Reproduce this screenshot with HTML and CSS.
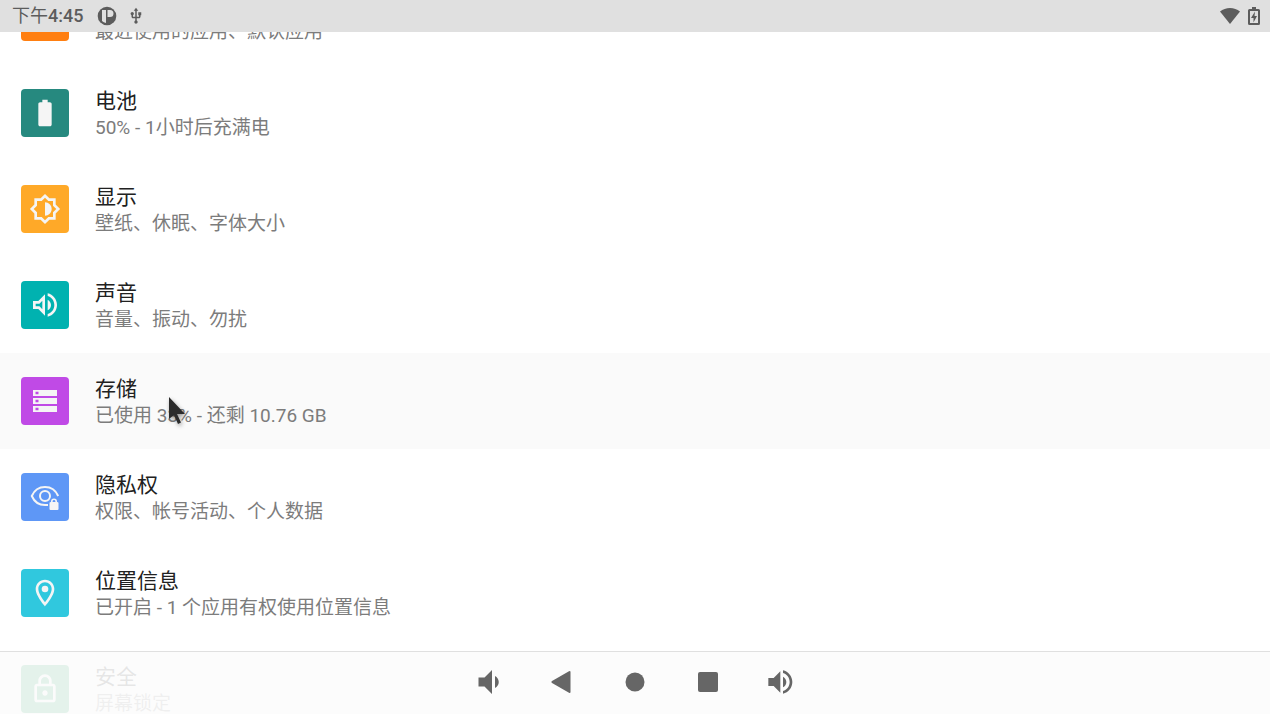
FILE: index.html
```html
<!DOCTYPE html>
<html lang="zh-CN">
<head>
    <meta charset="UTF-8">
    <meta name="viewport" content="width=device-width, initial-scale=1.0">
    <title>设置</title>
    <link rel="stylesheet" href="styles.css">
</head>
<body>
    <header class="status-bar">
        <div class="status-left">
            <div class="clock">下午<span class="clock-time">4:45</span></div>
            <svg class="status-app" viewBox="0 0 20 20">
                <circle cx="10" cy="10" r="9.300"/>
                <path class="cut" d="M5 4h4v13q-2.500-.500-4-2z"/>
                <path class="cut" d="M10.500 4h2.500a3.500 3.500 0 0 1 0 7H10.500z"/>
            </svg>
            <svg class="status-usb" viewBox="0 0 24 24">
                <path d="M15 7v4h1v2h-3V5h2l-3-4-3 4h2v8H8v-2.070c.700-.370 1.200-1.080 1.200-1.930 0-1.210-.990-2.200-2.200-2.200s-2.200.990-2.200 2.200c0 .850.500 1.560 1.200 1.930V13c0 1.110.890 2 2 2h3v3.050c-.710.370-1.200 1.100-1.200 1.950 0 1.220.990 2.200 2.200 2.200s2.200-.980 2.200-2.200c0-.850-.490-1.580-1.200-1.950V15h3c1.110 0 2-.890 2-2v-2h1V7h-4z"/>
            </svg>
        </div>
        <div class="status-right">
            <svg class="status-wifi" viewBox="0 0 20 16">
                <path d="M10 16L0 3.500C2.800 1.200 6.300 0 10 0s7.200 1.200 10 3.500z"/>
            </svg>
            <svg class="status-battery" viewBox="0 0 12 18">
                <path fill-rule="evenodd" d="M4 0h4v2h2.500q1.500 0 1.500 1.500v13q0 1.500-1.500 1.500h-9Q0 18 0 16.500v-13Q0 2 1.500 2H4zM2 4v12h8V4z"/>
                <path d="M7 4.500L3 11h2.500v4.500L9 9H6.500z"/>
            </svg>
        </div>
    </header>

    <main class="settings">
        <ul class="settings-list">
            <li>
                <a class="item" href="#apps">
                    <span class="icon icon-apps"></span>
                    <span class="text">
                        <span class="title">应用和通知</span>
                        <span class="summary">最近使用的应用、默认应用</span>
                    </span>
                </a>
            </li>
            <li>
                <a class="item" href="#battery">
                    <span class="icon icon-battery">
                        <svg viewBox="0 0 24 24"><path d="M15.670 4H14V2h-4v2H8.330C7.600 4 7 4.600 7 5.330v15.330C7 21.400 7.600 22 8.330 22h7.330c.740 0 1.340-.600 1.340-1.330V5.330C17 4.600 16.400 4 15.670 4z"/></svg>
                    </span>
                    <span class="text">
                        <span class="title">电池</span>
                        <span class="summary">50% - 1小时后充满电</span>
                    </span>
                </a>
            </li>
            <li>
                <a class="item" href="#display">
                    <span class="icon icon-display">
                        <svg viewBox="0 0 24 24"><path d="M20 15.310L23.310 12 20 8.690V4h-4.690L12 .690 8.690 4H4v4.690L.690 12 4 15.310V20h4.690L12 23.310 15.310 20H20v-4.690zm-2-.830V18h-3.520L12 20.480 9.520 18H6v-3.520L3.520 12 6 9.520V6h3.520L12 3.520 14.480 6H18v3.520L20.480 12 18 14.480zM12 7v10c2.760 0 5-2.240 5-5s-2.240-5-5-5z"/></svg>
                    </span>
                    <span class="text">
                        <span class="title">显示</span>
                        <span class="summary">壁纸、休眠、字体大小</span>
                    </span>
                </a>
            </li>
            <li>
                <a class="item" href="#sound">
                    <span class="icon icon-sound">
                        <svg viewBox="0 0 24 24"><path d="M3 9v6h4l5 5V4L7 9H3zm7-.170v6.340L7.830 13H5v-2h2.830L10 8.830zM16.500 12c0-1.770-1.020-3.290-2.500-4.030v8.050c1.480-.730 2.500-2.250 2.500-4.020zM14 3.230v2.060c2.890.860 5 3.540 5 6.710s-2.110 5.850-5 6.710v2.060c4.010-.910 7-4.490 7-8.770s-2.990-7.860-7-8.770z"/></svg>
                    </span>
                    <span class="text">
                        <span class="title">声音</span>
                        <span class="summary">音量、振动、勿扰</span>
                    </span>
                </a>
            </li>
            <li>
                <a class="item item-active" href="#storage">
                    <span class="icon icon-storage">
                        <svg viewBox="0 0 32 32"><path fill-rule="evenodd" d="M4 5h24v6H4zM6.500 6.700v2.600h3V6.700zM4 13h24v6H4zM6.500 14.700v2.600h3v-2.600zM4 21h24v6H4zM6.500 22.700v2.600h3v-2.600z"/></svg>
                    </span>
                    <span class="text">
                        <span class="title">存储</span>
                        <span class="summary">已使用 33% - 还剩 10.76 GB</span>
                    </span>
                </a>
            </li>
            <li>
                <a class="item" href="#privacy">
                    <span class="icon icon-privacy">
                        <svg viewBox="0 0 32 32">
                            <path class="line" d="M29.200 15C26.800 9.500 21.800 6 16 6S5.200 9.500 2.800 15C5.200 20.500 10.200 24 16 24h3"/>
                            <circle class="line" cx="16" cy="15" r="5"/>
                            <path fill-rule="evenodd" d="M22 21v-.500a3 3 0 0 1 6 0v.500q1.500 0 1.500 1v6q0 1-1 1h-7q-1 0-1-1v-6q0-1 1.500-1zM23.600 21h2.800v-.500a1.400 1.400 0 0 0-2.800 0z"/>
                        </svg>
                    </span>
                    <span class="text">
                        <span class="title">隐私权</span>
                        <span class="summary">权限、帐号活动、个人数据</span>
                    </span>
                </a>
            </li>
            <li>
                <a class="item" href="#location">
                    <span class="icon icon-location">
                        <svg viewBox="0 0 24 24"><path d="M12 2C8.130 2 5 5.130 5 9c0 5.250 7 13 7 13s7-7.750 7-13c0-3.870-3.130-7-7-7zM7 9c0-2.760 2.240-5 5-5s5 2.240 5 5c0 2.880-2.880 7.190-5 9.880C9.920 16.210 7 11.850 7 9z"/><circle cx="12" cy="9" r="2.500"/></svg>
                    </span>
                    <span class="text">
                        <span class="title">位置信息</span>
                        <span class="summary">已开启 - 1 个应用有权使用位置信息</span>
                    </span>
                </a>
            </li>
            <li>
                <a class="item" href="#security">
                    <span class="icon icon-security">
                        <svg viewBox="0 0 24 24"><path d="M18 8h-1V6c0-2.760-2.240-5-5-5S7 3.240 7 6v2H6c-1.100 0-2 .900-2 2v10c0 1.100.900 2 2 2h12c1.100 0 2-.900 2-2V10c0-1.100-.900-2-2-2zM9 6c0-1.660 1.340-3 3-3s3 1.340 3 3v2H9V6zm9 14H6V10h12v10zm-6-3c1.100 0 2-.900 2-2s-.900-2-2-2-2 .900-2 2 .900 2 2 2z"/></svg>
                    </span>
                    <span class="text">
                        <span class="title">安全</span>
                        <span class="summary">屏幕锁定</span>
                    </span>
                </a>
            </li>
        </ul>
    </main>

    <nav class="nav-bar">
        <button type="button" aria-label="音量减">
            <svg viewBox="0 0 24 24"><path d="M18.500 12c0-1.770-1.020-3.290-2.500-4.030v8.050c1.480-.730 2.500-2.250 2.500-4.020zM5 9v6h4l5 5V4L9 9H5z"/></svg>
        </button>
        <button type="button" aria-label="返回">
            <svg viewBox="0 0 36 36"><path d="M8 17L25 7.300q1.500-.800 1.500.700v20q0 1.500-1.500.700L8 19q-1.500-1 0-2z"/></svg>
        </button>
        <button type="button" aria-label="主屏幕">
            <svg viewBox="0 0 36 36"><circle cx="18" cy="18" r="9.500"/></svg>
        </button>
        <button type="button" aria-label="最近任务">
            <svg viewBox="0 0 36 36"><rect x="8" y="8" width="20" height="20" rx="2"/></svg>
        </button>
        <button type="button" aria-label="音量加">
            <svg viewBox="0 0 27 27"><path transform="translate(1 1.500)" d="M3 9v6h4l5 5V4L7 9H3zm13.500 3c0-1.770-1.020-3.290-2.500-4.030v8.050c1.480-.730 2.500-2.250 2.500-4.020zM14 3.230v2.060c2.890.860 5 3.540 5 6.710s-2.110 5.850-5 6.710v2.060c4.010-.910 7-4.490 7-8.770s-2.990-7.860-7-8.770z"/></svg>
        </button>
    </nav>

    <svg class="cursor" viewBox="0 0 24 34"><path d="M3 2v22l5-4 4 9 3-1.500-4-8.500h8z"/></svg>
</body>
</html>
```

FILE: styles.css
```css
* {
    box-sizing: border-box;
}
body {
    margin: 0;
    height: 100vh;
    overflow: hidden;
    background: #fff;
    color: #212121;
    font-family: Roboto, "Noto Sans CJK SC", sans-serif;
}
svg {
    display: block;
}

/* 状态栏 */
.status-bar {
    position: fixed;
    top: 0;
    left: 0;
    right: 0;
    z-index: 2;
    display: flex;
    align-items: center;
    justify-content: space-between;
    height: 32px;
    padding: 0 10px 0 12px;
    background: #e0e0e0;
    color: #5c5c5c;
    fill: #5c5c5c;
}
.status-left,
.status-right {
    display: flex;
    align-items: center;
}
.status-left {
    gap: 14px;
}
.status-right {
    gap: 8px;
}
.clock {
    font-size: 18px;
    line-height: 32px;
}
.clock-time {
    font-weight: 500;
}
.status-app {
    width: 20px;
    height: 20px;
}
.status-app .cut {
    fill: #e0e0e0;
}
.status-usb {
    width: 18px;
    height: 18px;
    margin-left: -4px;
}
.status-wifi {
    width: 20px;
    height: 16px;
}
.status-battery {
    width: 12px;
    height: 18px;
}

/* 设置列表 */
.settings {
    height: 100vh;
    overflow: hidden;
}
.settings-list {
    list-style: none;
    margin: -31px 0 0;
    padding: 0;
}
.item {
    display: flex;
    align-items: center;
    gap: 26px;
    height: 96px;
    padding: 0 21px;
    color: inherit;
    text-decoration: none;
}
.item-active {
    background: #fafafa;
}
.icon {
    display: flex;
    align-items: center;
    justify-content: center;
    width: 48px;
    height: 48px;
    border-radius: 4px;
    fill: #f5f5f5;
}
.icon svg {
    width: 32px;
    height: 32px;
}
.icon .line {
    fill: none;
    stroke: #f5f5f5;
    stroke-width: 2;
}
.icon-apps { background: #ff7f11; }
.icon-battery { background: #26897f; }
.icon-display { background: #ffa928; }
.icon-sound { background: #00b2b0; }
.icon-storage { background: #c04ae6; }
.icon-privacy { background: #5e97f6; }
.icon-location { background: #30c8de; }
.icon-security { background: #0f9d58; }
.text {
    display: flex;
    flex-direction: column;
    padding-top: 2px;
}
.title {
    font-size: 21px;
    line-height: 28px;
}
.summary {
    font-size: 19px;
    line-height: 26px;
    color: #7c7c7c;
}

/* 导航栏 */
.nav-bar {
    position: fixed;
    left: 0;
    right: 0;
    bottom: 0;
    z-index: 2;
    display: flex;
    justify-content: center;
    height: 63px;
    padding-bottom: 2px;
    border-top: 1px solid #e0e0e0;
    background: rgba(252, 252, 252, 0.9);
}
.nav-bar button {
    display: flex;
    align-items: center;
    justify-content: center;
    width: 73px;
    padding: 0;
    border: none;
    background: none;
    fill: #666;
    cursor: pointer;
}
.nav-bar svg {
    width: 36px;
    height: 36px;
}

/* 鼠标指针 */
.cursor {
    position: absolute;
    left: 166px;
    top: 395px;
    z-index: 3;
    width: 24px;
    height: 34px;
    fill: #2b2b2b;
    filter: drop-shadow(1px 2px 2px rgba(0, 0, 0, 0.4));
}
```
